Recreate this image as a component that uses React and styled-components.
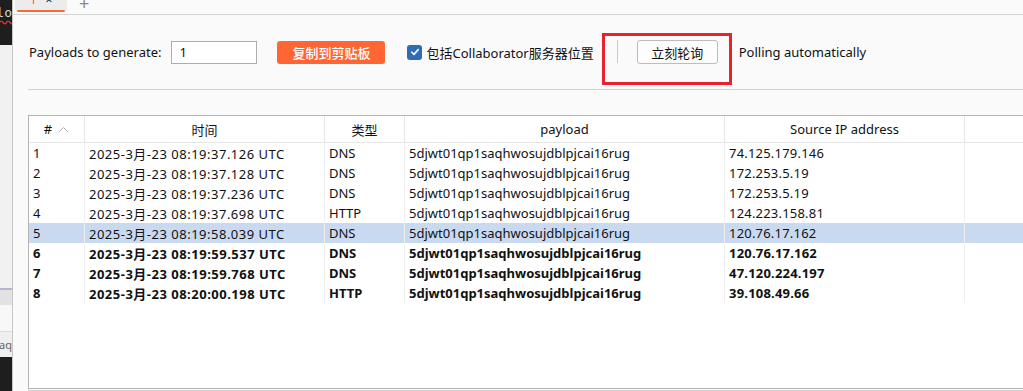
import styled, { createGlobalStyle } from "styled-components";

const GlobalStyle = createGlobalStyle`
  html, body {
    margin: 0;
    padding: 0;
    width: 1023px;
    height: 391px;
    overflow: hidden;
    background: #fafafa;
  }
  * {
    box-sizing: border-box;
  }
`;

const FONT = `"Noto Sans", "Noto Sans CJK SC", sans-serif`;

const Screen = styled.div`
  display: flex;
  width: 1023px;
  height: 391px;
  overflow: hidden;
  font-family: ${FONT};
  font-size: 13px;
  color: #111;
`;

const Strip = styled.div`
  width: 13px;
  flex: none;
  display: flex;
  flex-direction: column;
  border-right: 1px solid #c6c6c6;
  overflow: hidden;
`;

const StripPart = styled.div`
  height: ${(p) => p.$h}px;
  flex: ${(p) => (p.$grow ? 1 : "none")};
  background: ${(p) => p.$bg};
  border-top: ${(p) => p.$line || "none"};
  display: flex;
  align-items: center;
  justify-content: flex-end;
  overflow: hidden;
  white-space: nowrap;
`;

const CodeBit = styled.span`
  font-family: "DejaVu Sans Mono", monospace;
  font-size: 13px;
  color: #d7d7d7;
  margin-top: -20px;
  text-decoration: underline wavy #e03030;
  text-underline-offset: 3px;
`;

const FadedText = styled.span`
  font-size: 11px;
  color: #666;
`;

const Main = styled.div`
  flex: 1;
  display: flex;
  flex-direction: column;
  min-width: 0;
`;

const TabBar = styled.div`
  height: 15px;
  flex: none;
  display: flex;
  align-items: flex-start;
  border-bottom: 1px solid #d4d4d4;
  padding-left: 2px;
  overflow: hidden;
`;

const Tab = styled.div`
  width: 52px;
  height: 12px;
  background: #ececec;
  border-radius: 0 0 4px 4px;
  display: flex;
  flex-direction: column;
  align-items: center;
  overflow: hidden;
`;

const TabLabel = styled.div`
  display: flex;
  gap: 9px;
  height: 14px;
  margin-top: -7px;
  align-items: center;
  font-size: 12px;
  line-height: 14px;
`;

const TabNum = styled.span`
  color: #ff5a2a;
`;

const TabUnderline = styled.div`
  width: 48px;
  height: 2px;
  margin-top: 3px;
  border-radius: 1px;
  background: #ff6633;
`;

const AddTab = styled.div`
  margin-left: 12px;
  margin-top: -1px;
  font-size: 18px;
  line-height: 8px;
  color: #888;
  height: 8px;
`;

const Toolbar = styled.div`
  height: 74px;
  flex: none;
  display: flex;
  align-items: center;
  padding-left: 16px;
`;

const Label = styled.span`
  font-size: 13px;
  white-space: nowrap;
  margin-right: ${(p) => p.$mr || 0}px;
`;

const NumberInput = styled.div`
  width: 86px;
  height: 23px;
  background: #fff;
  border: 1px solid #adadad;
  padding-left: 7px;
  line-height: 21px;
  margin-right: 20px;
`;

const OrangeButton = styled.button`
  width: 108px;
  height: 23px;
  border: none;
  border-radius: 3px;
  background: #ff6633;
  color: #fff;
  font-family: ${FONT};
  font-size: 13px;
  font-weight: 500;
  padding: 0;
  margin-right: 22px;
`;

const Check = styled.span`
  width: 15px;
  height: 15px;
  border-radius: 3px;
  background: #2e6cb3;
  display: inline-flex;
  align-items: center;
  justify-content: center;
  margin-right: 4px;
`;

const Callout = styled.div`
  margin-top: 14px;
  margin-left: 8px;
  margin-right: 7px;
  display: flex;
  align-items: flex-start;
  border: 3px solid #e8212b;
  padding: 4px 11px 18px 12px;
`;

const VSep = styled.div`
  width: 1px;
  height: 23px;
  background: #c9c9c9;
  margin-right: 19px;
`;

const PollButton = styled.button`
  width: 81px;
  height: 24px;
  background: #fdfdfd;
  border: 1px solid #bcbcbc;
  border-radius: 3px;
  font-family: ${FONT};
  font-size: 13px;
  color: #111;
  padding: 0;
`;

const Divider = styled.div`
  height: 1px;
  flex: none;
  background: #d2d2d2;
  margin-left: 15px;
`;

const Table = styled.div`
  margin: 25px -40px 0 15px;
  height: 274px;
  flex: none;
  background: #fff;
  border: 1px solid #b3b3b3;
  display: flex;
  flex-direction: column;
`;

const Grid = styled.div`
  display: grid;
  grid-template-columns: 56px 240px 80px 320px 240px 1fr;
  height: ${(p) => p.$h}px;
  background: ${(p) => (p.$selected ? "#c9daf0" : "transparent")};
  font-weight: ${(p) => (p.$bold ? 700 : 400)};
  border-bottom: ${(p) => (p.$head ? "1px solid #e6e6e6" : "none")};
`;

const HeadCell = styled.div`
  border-right: 1px solid #e6e6e6;
  display: flex;
  align-items: center;
  justify-content: center;
  gap: 6px;
  color: #111;
`;

const Cell = styled.div`
  border-right: 1px solid #efefef;
  padding-left: 4px;
  display: flex;
  align-items: center;
  white-space: nowrap;
  overflow: hidden;
  letter-spacing: ${(p) => p.$spread || 0}px;
`;

const Footer = styled.div`
  height: 1px;
  margin: 1px 0 0 15px;
  background: #cfcfcf;
`;

const rows = [
  ["1", "2025-3月-23 08:19:37.126 UTC", "DNS", "74.125.179.146"],
  ["2", "2025-3月-23 08:19:37.128 UTC", "DNS", "172.253.5.19"],
  ["3", "2025-3月-23 08:19:37.236 UTC", "DNS", "172.253.5.19"],
  ["4", "2025-3月-23 08:19:37.698 UTC", "HTTP", "124.223.158.81"],
  ["5", "2025-3月-23 08:19:58.039 UTC", "DNS", "120.76.17.162"],
  ["6", "2025-3月-23 08:19:59.537 UTC", "DNS", "120.76.17.162"],
  ["7", "2025-3月-23 08:19:59.768 UTC", "DNS", "47.120.224.197"],
  ["8", "2025-3月-23 08:20:00.198 UTC", "HTTP", "39.108.49.66"],
];

const PAYLOAD = "5djwt01qp1saqhwosujdblpjcai16rug";

export default function App() {
  return (
    <>
      <GlobalStyle />
      <Screen>
        <Strip>
          <StripPart $h={45} $bg="#1e1e1e">
            <CodeBit>lo</CodeBit>
          </StripPart>
          <StripPart $h={243} $bg="#f1f1f1" />
          <StripPart $h={17} $bg="#e2e2e2" $line="2px solid #b9b2d3" />
          <StripPart $h={26} $bg="#f8f8f8" />
          <StripPart $h={26} $bg="#efefef" $line="1px solid #dcdcdc">
            <FadedText>saq</FadedText>
          </StripPart>
          <StripPart $grow $bg="#1e1e1e" />
        </Strip>
        <Main>
          <TabBar>
            <Tab>
              <TabLabel>
                <TabNum>1</TabNum>
                <span>×</span>
              </TabLabel>
              <TabUnderline />
            </Tab>
            <AddTab>+</AddTab>
          </TabBar>
          <Toolbar>
            <Label $mr={10}>Payloads to generate:</Label>
            <NumberInput>1</NumberInput>
            <OrangeButton>复制到剪贴板</OrangeButton>
            <Check>
              <svg width="10" height="10" viewBox="0 0 10 10">
                <polyline
                  points="1.8,5.2 4,7.4 8.2,2.6"
                  fill="none"
                  stroke="#fff"
                  strokeWidth="1.6"
                  strokeLinecap="round"
                  strokeLinejoin="round"
                />
              </svg>
            </Check>
            <Label>包括Collaborator服务器位置</Label>
            <Callout>
              <VSep />
              <PollButton>立刻轮询</PollButton>
            </Callout>
            <Label>Polling automatically</Label>
          </Toolbar>
          <Divider />
          <Table>
            <Grid $h={27} $head>
              <HeadCell>
                #
                <svg width="11" height="7" viewBox="0 0 11 7">
                  <polyline
                    points="1,6 5.5,1.5 10,6"
                    fill="none"
                    stroke="#b5b5b5"
                    strokeWidth="1"
                  />
                </svg>
              </HeadCell>
              <HeadCell>时间</HeadCell>
              <HeadCell>类型</HeadCell>
              <HeadCell>payload</HeadCell>
              <HeadCell>Source IP address</HeadCell>
              <HeadCell />
            </Grid>
            {rows.map(([n, time, type, ip]) => (
              <Grid
                key={n}
                $h={20}
                $selected={n === "5"}
                $bold={Number(n) > 5}
              >
                <Cell>{n}</Cell>
                <Cell $spread={0.5}>{time}</Cell>
                <Cell>{type}</Cell>
                <Cell>{PAYLOAD}</Cell>
                <Cell $spread={0.2}>{ip}</Cell>
                <Cell />
              </Grid>
            ))}
          </Table>
          <Footer />
        </Main>
      </Screen>
    </>
  );
}
